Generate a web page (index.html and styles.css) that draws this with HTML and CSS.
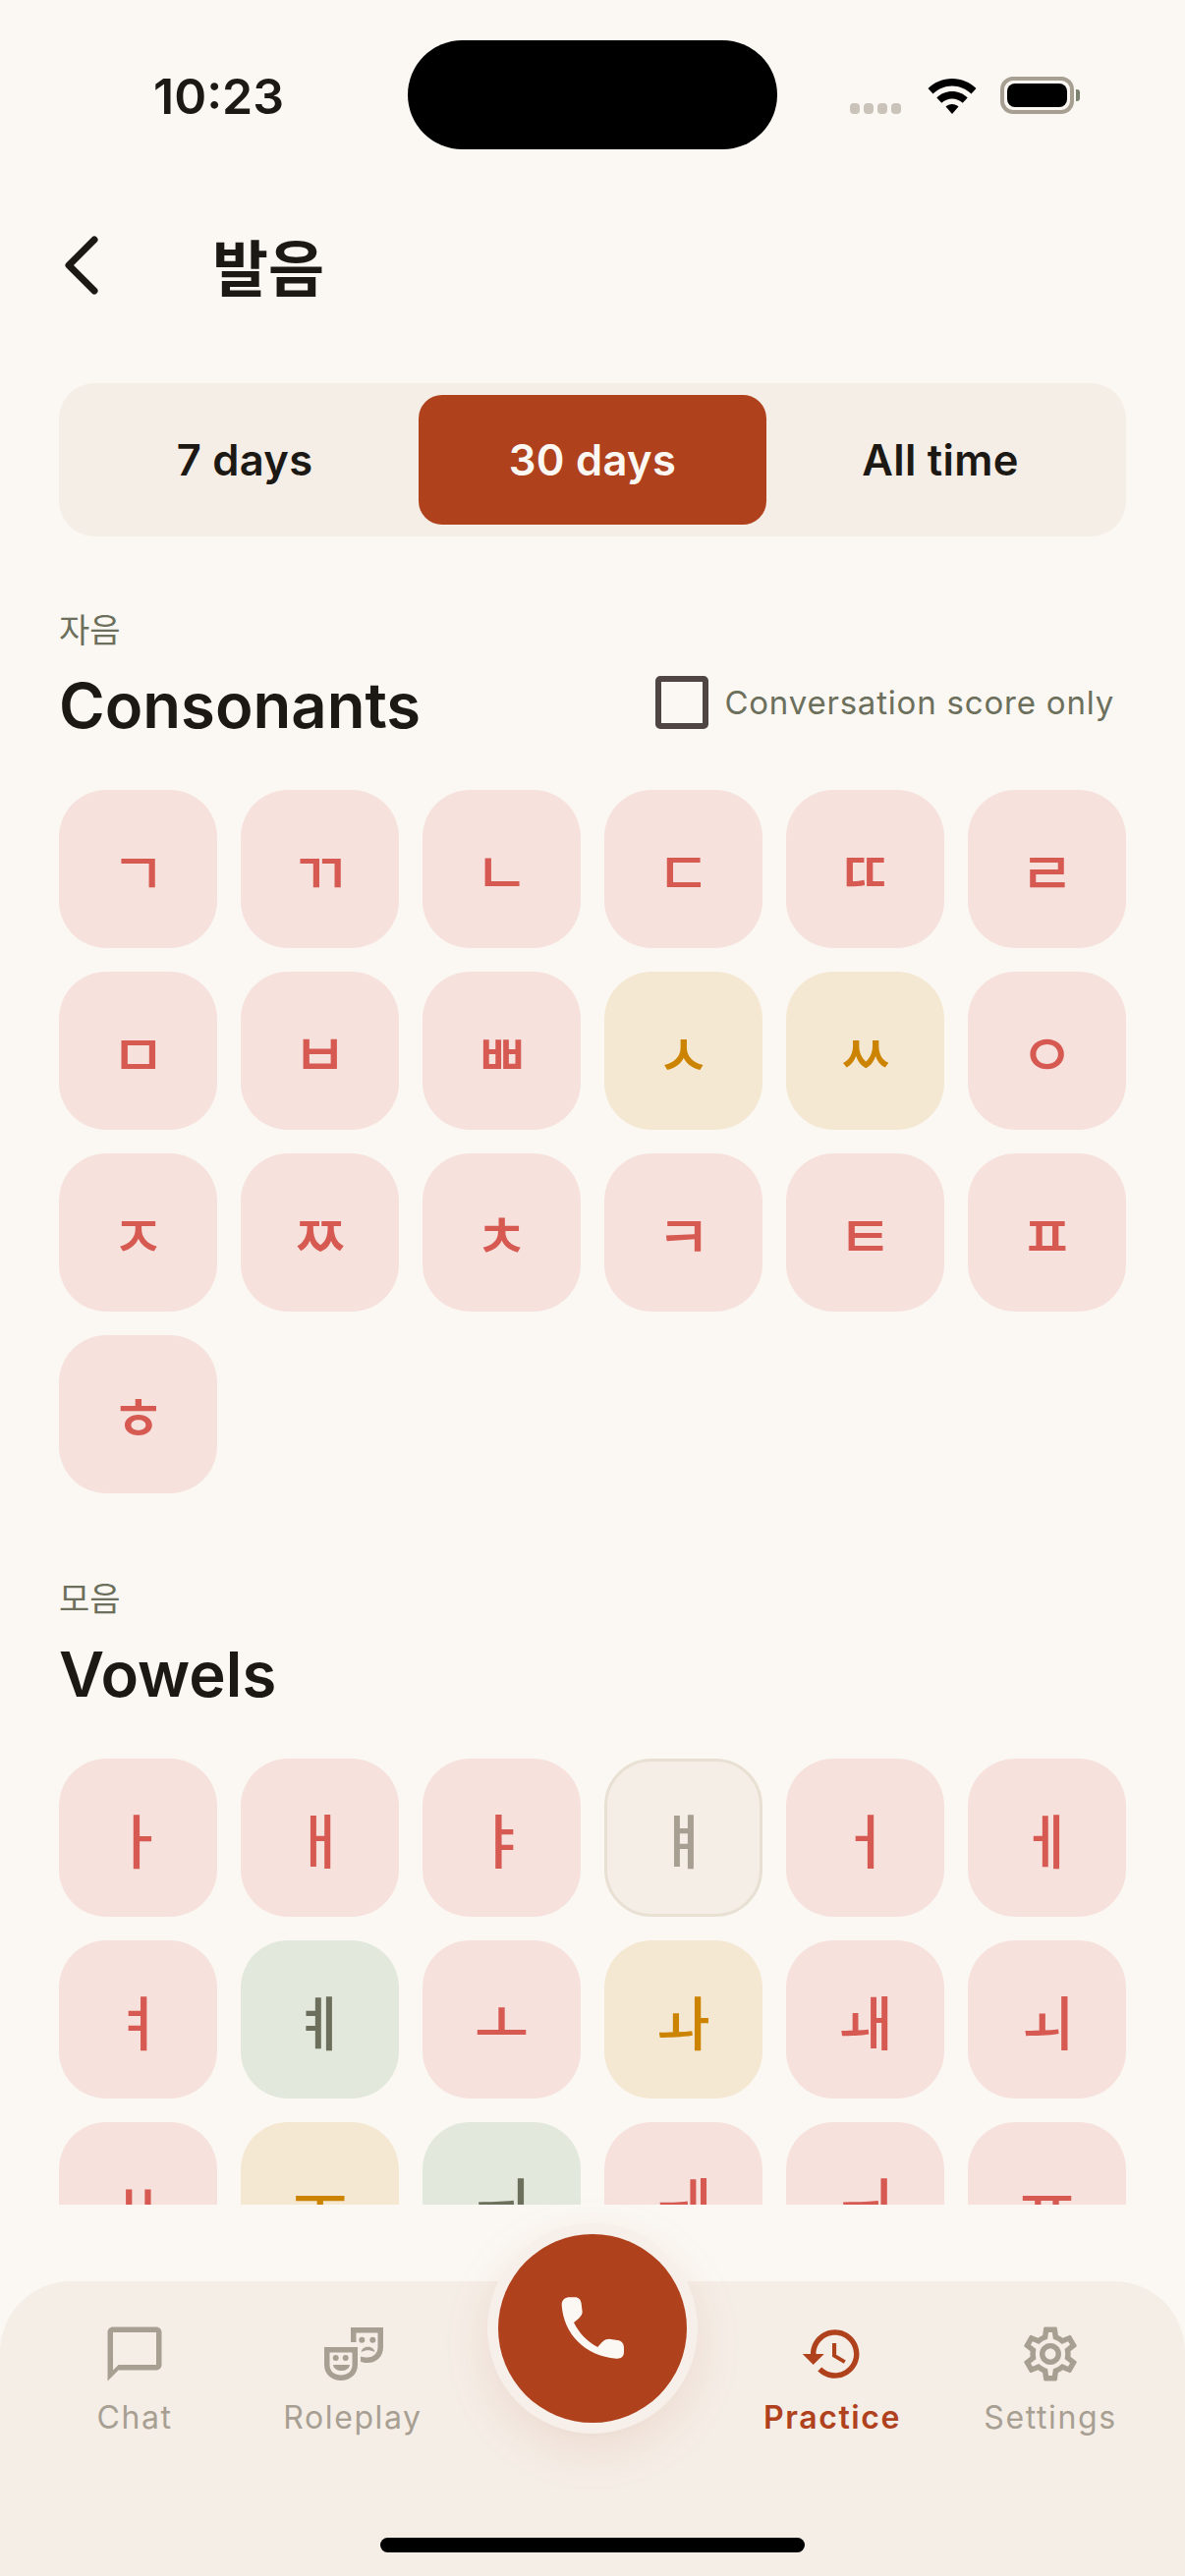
FILE: index.html
```html
<!DOCTYPE html>
<html lang="ko">
<head>
  <meta charset="utf-8">
  <meta name="viewport" content="width=device-width, initial-scale=1.0">
  <title>발음</title>
  <link rel="stylesheet" href="styles.css">
</head>
<body>
  <div id="screen">
    <div class="status-bar">
      <span class="status-time">10:23</span>
      <div class="island"></div>
      <div class="status-icons">
        <div class="signal"><i></i><i></i><i></i><i></i></div>
        <svg class="wifi" viewBox="0 0 50 36"><path d="M25 0C15.500 0 7 3.700 0.500 10L5.500 15.500C10.700 10.500 17.500 7.500 25 7.500S39.300 10.500 44.500 15.500L49.500 10C43 3.700 34.500 0 25 0Z"/><path d="M25 13C19 13 13.500 15.400 9.300 19.400L14.300 24.800C17.100 22.200 20.900 20.600 25 20.600S32.900 22.200 35.700 24.800L40.700 19.400C36.500 15.400 31 13 25 13Z"/><path d="M25 26C22.500 26 20.200 26.900 18.500 28.500L25 36L31.500 28.500C29.800 26.900 27.500 26 25 26Z"/></svg>
        <div class="battery"><div class="battery-level"></div></div>
        <div class="battery-tip"></div>
      </div>
    </div>

    <div class="header">
      <svg class="back" viewBox="0 0 36 60"><path d="M32 4 6 30 32 56"/></svg>
      <h1>발음</h1>
    </div>

    <div class="tabs">
      <div class="tab">7 days</div>
      <div class="tab active">30 days</div>
      <div class="tab">All time</div>
    </div>

    <div class="scroll">
      <section class="group">
        <div class="group-sub">자음</div>
        <div class="group-head">
          <h2>Consonants</h2>
          <label class="score-only"><span class="check"></span>Conversation score only</label>
        </div>
        <div class="grid">
          <div class="cell low">ㄱ</div>
          <div class="cell low">ㄲ</div>
          <div class="cell low">ㄴ</div>
          <div class="cell low">ㄷ</div>
          <div class="cell low">ㄸ</div>
          <div class="cell low">ㄹ</div>
          <div class="cell low">ㅁ</div>
          <div class="cell low">ㅂ</div>
          <div class="cell low">ㅃ</div>
          <div class="cell mid">ㅅ</div>
          <div class="cell mid">ㅆ</div>
          <div class="cell low">ㅇ</div>
          <div class="cell low">ㅈ</div>
          <div class="cell low">ㅉ</div>
          <div class="cell low">ㅊ</div>
          <div class="cell low">ㅋ</div>
          <div class="cell low">ㅌ</div>
          <div class="cell low">ㅍ</div>
          <div class="cell low">ㅎ</div>
        </div>
      </section>

      <section class="group">
        <div class="group-sub">모음</div>
        <div class="group-head">
          <h2>Vowels</h2>
        </div>
        <div class="grid">
          <div class="cell low">ㅏ</div>
          <div class="cell low">ㅐ</div>
          <div class="cell low">ㅑ</div>
          <div class="cell none">ㅒ</div>
          <div class="cell low">ㅓ</div>
          <div class="cell low">ㅔ</div>
          <div class="cell low">ㅕ</div>
          <div class="cell good">ㅖ</div>
          <div class="cell low">ㅗ</div>
          <div class="cell mid">ㅘ</div>
          <div class="cell low">ㅙ</div>
          <div class="cell low">ㅚ</div>
          <div class="cell low">ㅛ</div>
          <div class="cell mid">ㅜ</div>
          <div class="cell good">ㅝ</div>
          <div class="cell low">ㅞ</div>
          <div class="cell low">ㅟ</div>
          <div class="cell low">ㅠ</div>
        </div>
      </section>
    </div>

    <nav class="nav">
      <div class="nav-item">
        <svg viewBox="0 0 24 24"><path d="M20 2H4c-1.100 0-2 .9-2 2v18l4-4h14c1.100 0 2-.9 2-2V4c0-1.100-.9-2-2-2zm0 14H6l-2 2V4h16v12z"/></svg>
        <span>Chat</span>
      </div>
      <div class="nav-item">
        <svg viewBox="0 0 66 66"><path fill-rule="evenodd" d="M4 26H38V44C38 54 30 60 21 60C12 60 4 54 4 44ZM9.500 31.500V44C9.500 51 15 54.500 21 54.500C27 54.500 32.500 51 32.500 44V31.500ZM12.700 37A3 3 0 1 1 18.700 37A3 3 0 1 1 12.700 37ZM22.700 37A3 3 0 1 1 28.700 37A3 3 0 1 1 22.700 37ZM13 44H30C29 52 14 52 13 44Z"/><path fill-rule="evenodd" d="M31 6H64V26C64 36 57 42 48 42C45 42 43 41.500 41 41V35.500C43 36.300 46 36.500 48 36.500C54 36.500 58.500 32 58.500 26V11.500H36.500V21H31ZM39.300 18.700A3 3 0 1 1 45.300 18.700A3 3 0 1 1 39.300 18.700ZM50.300 18.700A3 3 0 1 1 56.300 18.700A3 3 0 1 1 50.300 18.700ZM41.500 31C43 24 54 24 55.500 31C50 28.500 47 28.500 41.500 31Z"/></svg>
        <span>Roleplay</span>
      </div>
      <div class="nav-gap"></div>
      <div class="nav-item current">
        <svg viewBox="0 0 24 24"><path d="M13 3c-4.970 0-9 4.030-9 9H1l3.890 3.890.07.14L9 12H6c0-3.870 3.130-7 7-7s7 3.130 7 7-3.130 7-7 7c-1.930 0-3.680-.79-4.940-2.060l-1.420 1.420C8.270 19.990 10.510 21 13 21c4.970 0 9-4.030 9-9s-4.030-9-9-9zm-1 5v5l4.280 2.540.72-1.210-3.500-2.080V8H12z"/></svg>
        <span>Practice</span>
      </div>
      <div class="nav-item">
        <svg viewBox="0 0 24 24"><path d="M19.430 12.980c.04-.32.07-.64.07-.98 0-.34-.03-.66-.07-.98l2.110-1.650c.19-.15.24-.42.12-.64l-2-3.460c-.09-.16-.26-.25-.44-.25-.06 0-.12.01-.17.03l-2.490 1c-.52-.4-1.080-.73-1.690-.98l-.38-2.650C14.460 2.180 14.250 2 14 2h-4c-.25 0-.46.18-.49.42l-.38 2.650c-.61.25-1.170.59-1.690.98l-2.490-1c-.06-.02-.12-.03-.18-.03-.17 0-.34.09-.43.25l-2 3.460c-.13.22-.07.49.12.64l2.110 1.650c-.04.32-.07.65-.07.98 0 .33.03.66.07.98l-2.110 1.650c-.19.15-.24.42-.12.64l2 3.460c.09.16.26.25.44.25.06 0 .12-.01.17-.03l2.490-1c.52.4 1.080.73 1.690.98l.38 2.650c.03.24.24.42.49.42h4c.25 0 .46-.18.49-.42l.38-2.650c.61-.25 1.170-.59 1.690-.98l2.490 1c.06.02.12.03.18.03.17 0 .34-.09.43-.25l2-3.460c.12-.22.07-.49-.12-.64l-2.110-1.650zm-1.980-1.710c.04.31.05.52.05.73 0 .21-.02.43-.05.73l-.14 1.130.89.7 1.080.84-.7 1.210-1.270-.51-1.040-.42-.9.68c-.43.32-.84.56-1.250.73l-1.060.43-.16 1.130-.2 1.350h-1.400l-.19-1.350-.16-1.130-1.060-.43c-.43-.18-.83-.41-1.230-.71l-.91-.7-1.060.43-1.270.51-.7-1.210 1.080-.84.89-.7-.14-1.130c-.03-.31-.05-.54-.05-.74s.02-.43.05-.73l.14-1.130-.89-.7-1.080-.84.7-1.210 1.270.51 1.040.42.9-.68c.43-.32.84-.56 1.250-.73l1.060-.43.16-1.130.2-1.350h1.390l.19 1.350.16 1.130 1.060.43c.43.18.83.41 1.230.71l.91.7 1.060-.43 1.270-.51.7 1.210-1.070.85-.89.7.14 1.130zM12 8c-2.210 0-4 1.790-4 4s1.790 4 4 4 4-1.790 4-4-1.790-4-4-4zm0 6c-1.100 0-2-.9-2-2s.9-2 2-2 2 .9 2 2-.9 2-2 2z"/></svg>
        <span>Settings</span>
      </div>
      <div class="home-bar"></div>
    </nav>

    <div class="call">
      <svg viewBox="0 0 378 360"><path d="M95 108C95 92 106 85 120 85H135C147 85 153 92 155 104L158 130C158 140 148 150 132 162C148 195 175 222 205 237C217 222 226 212 240 212L265 216C278 218 285 226 285 240V252C285 266 276 273 262 272C165 265 100 195 95 108Z"/></svg>
    </div>
  </div>
</body>
</html>
```

FILE: styles.css
```css
* {
  box-sizing: border-box;
}

html, body {
  margin: 0;
  padding: 0;
}

body {
  font-family: Inter, "Noto Sans CJK KR", sans-serif;
  background-color: #fbf8f3;
  color: #1c1814;
}

#screen {
  position: relative;
  width: 1206px;
  height: 2622px;
  overflow: hidden;
  display: flex;
  flex-direction: column;
}

/* status bar */
.status-bar {
  position: relative;
  height: 152px;
  flex: none;
}

.status-time {
  position: absolute;
  left: 156px;
  top: 70px;
  font-size: 50px;
  line-height: 56px;
  font-weight: 600;
  font-family: Inter, sans-serif;
}

.island {
  position: absolute;
  left: 415px;
  top: 41px;
  width: 376px;
  height: 111px;
  border-radius: 56px;
  background-color: #000;
}

.status-icons {
  position: absolute;
  left: 865px;
  top: 78px;
  display: flex;
  align-items: flex-end;
}

.signal {
  display: flex;
  gap: 4px;
  margin-right: 27px;
}

.signal i {
  display: block;
  width: 10px;
  height: 11px;
  border-radius: 4px;
  background-color: #c9c3ba;
}

.wifi {
  display: block;
  width: 50px;
  height: 36px;
  margin-right: 24px;
}

.battery {
  width: 75px;
  height: 38px;
  border: 4px solid #a89f93;
  border-radius: 13px;
  padding: 3px;
}

.battery-level {
  width: 100%;
  height: 100%;
  background-color: #000;
  border-radius: 8px;
}

.battery-tip {
  width: 4px;
  height: 12px;
  margin: 0 0 13px 2px;
  background-color: #7c8270;
  border-radius: 0 3px 3px 0;
}

/* header */
.header {
  display: flex;
  align-items: center;
  height: 120px;
  margin-top: 58px;
  padding-left: 64px;
  flex: none;
}

.back {
  width: 36px;
  height: 60px;
  fill: none;
  stroke: #1c1814;
  stroke-width: 7;
  stroke-linecap: round;
  stroke-linejoin: round;
}

.header h1 {
  margin: 0 0 0 116px;
  font-size: 62px;
  line-height: 70px;
  font-weight: 600;
  font-family: "Noto Sans CJK KR", sans-serif;
}

/* range tabs */
.tabs {
  flex: none;
  display: flex;
  margin: 60px 60px 0;
  height: 156px;
  padding: 12px;
  background-color: #f5eee7;
  border-radius: 36px;
}

.tab {
  flex: 1;
  display: flex;
  align-items: center;
  justify-content: center;
  font-size: 43.5px;
  font-weight: 600;
  letter-spacing: 0.3px;
  border-radius: 24px;
}

.tab.active {
  background-color: #b0411d;
  color: #fbf8f3;
}

/* scrolling part */
.scroll {
  flex: none;
  height: 1698px;
  padding: 72px 60px 0;
  overflow: hidden;
}

.group {
  margin-bottom: 84px;
}

.group-sub {
  font-size: 34px;
  line-height: 44px;
  color: #6b6f5b;
  font-family: "Noto Sans CJK KR", sans-serif;
}

.group-head {
  display: flex;
  align-items: center;
  justify-content: space-between;
  height: 76px;
  margin-top: 18px;
}

.group-head h2 {
  margin: 0;
  font-size: 63.4px;
  line-height: 76px;
  font-weight: 600;
}

.score-only {
  display: flex;
  align-items: center;
  gap: 16px;
  margin-right: 12px;
  margin-bottom: 6px;
  font-size: 33px;
  letter-spacing: 0.8px;
  color: #6b6f5b;
}

.check {
  width: 54px;
  height: 54px;
  border: 6px solid #4f4543;
  border-radius: 5px;
}

.grid {
  display: grid;
  grid-template-columns: repeat(6, 161px);
  grid-auto-rows: 161px;
  gap: 24px;
  margin-top: 48px;
}

.cell {
  display: flex;
  align-items: center;
  justify-content: center;
  font-size: 60px;
  font-family: "Noto Sans CJK KR", sans-serif;
  font-weight: 500;
  border-radius: 48px;
}

.cell.low {
  background-color: #f6e1dd;
  color: #d65a52;
}

.cell.mid {
  background-color: #f5e8d3;
  color: #cc8400;
}

.cell.good {
  background-color: #e2e9dc;
  color: #6b6f5b;
}

.cell.none {
  background-color: #f5eee7;
  border: 3px solid #e8e0d3;
  color: #a89f93;
}

/* bottom nav */
.nav {
  position: absolute;
  left: 0;
  right: 0;
  bottom: 0;
  height: 300px;
  background-color: #f5eee7;
  border-radius: 72px 72px 0 0;
  display: flex;
  padding: 41px 25px 0 26px;
}

.nav-item {
  width: 222px;
  display: flex;
  flex-direction: column;
  align-items: center;
  gap: 12px;
  color: #a89f93;
  font-size: 32px;
  letter-spacing: 1.6px;
}

.nav-item svg {
  width: 66px;
  height: 66px;
  fill: currentColor;
}

.nav-gap {
  width: 266px;
}

.nav-item.current {
  color: #b0411d;
  font-weight: 600;
}

.home-bar {
  position: absolute;
  left: 387px;
  bottom: 24px;
  width: 432px;
  height: 15px;
  border-radius: 8px;
  background-color: #000;
}

/* call button sits over the nav */
.call {
  position: absolute;
  left: 507px;
  top: 2274px;
  width: 192px;
  height: 192px;
  border-radius: 50%;
  background-color: #b0411d;
  box-shadow: 0 0 0 11px #f7f0ea, 0 16px 60px rgba(176, 65, 29, 0.16);
  display: flex;
  align-items: center;
  justify-content: center;
}

.call svg {
  width: 126px;
  height: 120px;
  fill: #fbf8f3;
}
```
